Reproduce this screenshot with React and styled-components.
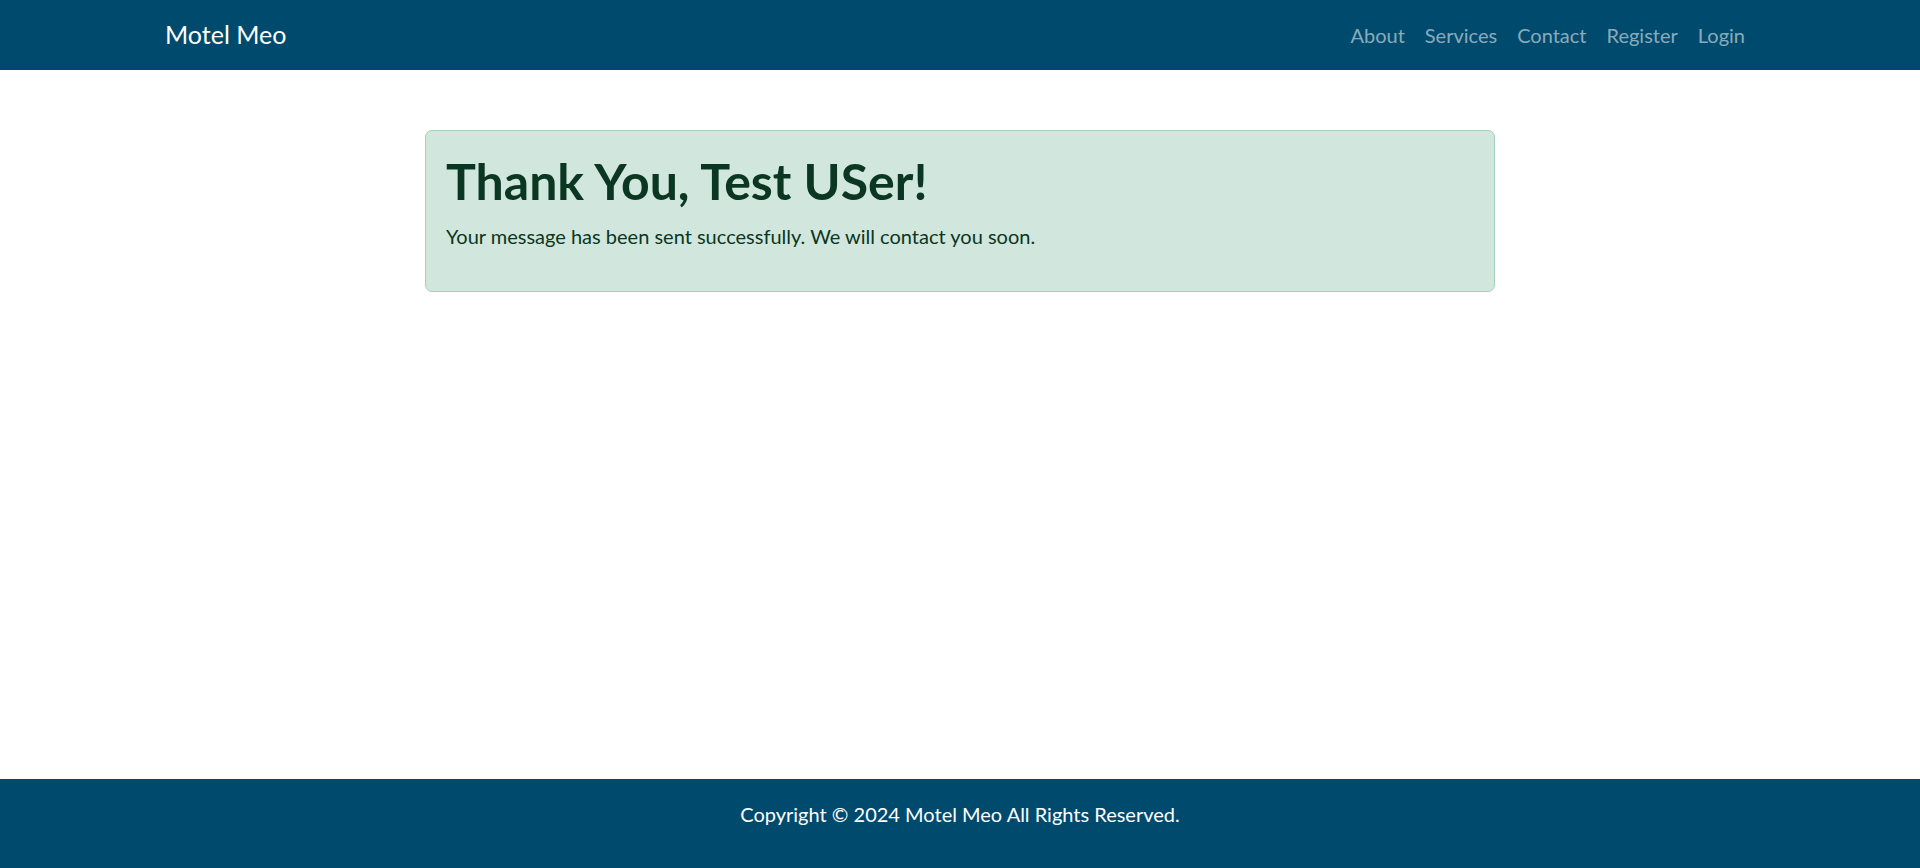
import styled, { createGlobalStyle } from "styled-components";

const GlobalStyle = createGlobalStyle`
  *, *::before, *::after {
    box-sizing: border-box;
  }

  body {
    margin: 0;
    font-family: Lato, "Open Sans", sans-serif;
    font-size: 20px;
    line-height: 1.5;
    color: #212529;
    background: #fff;
  }
`;

const navLinks = ["About", "Services", "Contact", "Register", "Login"];

function App() {
  return (
    <>
      <GlobalStyle />
      <Page>
        <Navbar>
          <Brand href="#">Motel Meo</Brand>
          <NavList>
            {navLinks.map((link) => (
              <li key={link}>
                <NavLink href="#">{link}</NavLink>
              </li>
            ))}
          </NavList>
        </Navbar>
        <Main>
          <Alert>
            <Heading>Thank You, Test USer!</Heading>
            <Message>
              Your message has been sent successfully. We will contact you soon.
            </Message>
          </Alert>
        </Main>
        <Footer>Copyright © 2024 Motel Meo All Rights Reserved.</Footer>
      </Page>
    </>
  );
}

export default App;

const Page = styled.div`
  display: flex;
  flex-direction: column;
  min-height: 100vh;
`;

const Navbar = styled.nav`
  display: flex;
  align-items: center;
  justify-content: space-between;
  height: 70px;
  padding: 0 165px 0 165px;
  background-color: #004a6d;
`;

const Brand = styled.a`
  padding: 6px 0;
  color: #fff;
  font-size: 25px;
  text-decoration: none;
`;

const NavList = styled.ul`
  display: flex;
  margin: 0;
  padding: 0;
  list-style: none;
`;

const NavLink = styled.a`
  display: block;
  padding: 10px;
  color: rgba(255, 255, 255, 0.55);
  text-decoration: none;
`;

const Main = styled.main`
  flex: 1;
  padding-top: 60px;
`;

const Alert = styled.div`
  width: 1070px;
  margin: 0 auto;
  padding: 20px;
  color: #0a3622;
  background-color: #d1e7dd;
  border: 1px solid #a3cfbb;
  border-radius: 7px;
`;

const Heading = styled.h1`
  margin: 0 0 10px;
  font-size: 50px;
  font-weight: 700;
  line-height: 1.2;
`;

const Message = styled.p`
  margin: 0 0 20px;
`;

const Footer = styled.footer`
  padding: 20px 0 39px;
  color: #fff;
  text-align: center;
  background-color: #004a6d;
`;
